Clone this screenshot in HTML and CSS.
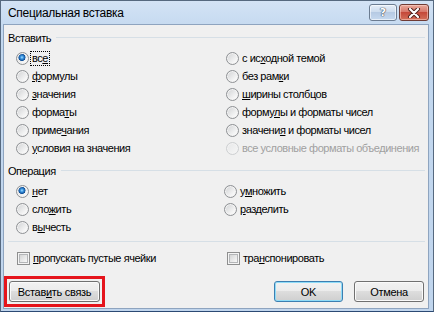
FILE: index.html
```html
<!DOCTYPE html>
<html lang="ru">

<head>
  <meta charset="UTF-8" />
  <meta name="viewport" content="width=device-width, initial-scale=1.0" />
  <title>Специальная вставка</title>
  <link rel="stylesheet" href="styles.css">
</head>

<body>
  <div class="window">
    <div class="titlebar">
      <span class="title">Специальная вставка</span>
      <div class="caption-buttons">
        <span class="cap-btn help">?</span>
        <span class="cap-btn close">
          <svg width="14" height="10" viewBox="0 0 14 10">
            <path d="M3 1 L11 9 M11 1 L3 9" stroke="#4a1d18" stroke-width="4" stroke-linecap="round" />
            <path d="M3 1 L11 9 M11 1 L3 9" stroke="#ffffff" stroke-width="2.2" stroke-linecap="round" />
          </svg>
        </span>
      </div>
    </div>

    <div class="body">
      <div class="group-head"><span>Вставить</span><span class="rule"></span></div>
      <div class="options paste">
        <div class="opt"><span class="radio checked"></span><span class="focus">вс<u>е</u></span></div>
        <div class="opt"><span class="radio"></span><span>с ис<u>х</u>одной темой</span></div>
        <div class="opt"><span class="radio"></span><span><u>ф</u>ормулы</span></div>
        <div class="opt"><span class="radio"></span><span>без рам<u>к</u>и</span></div>
        <div class="opt"><span class="radio"></span><span><u>з</u>начения</span></div>
        <div class="opt"><span class="radio"></span><span><u>ш</u>ирины столбцов</span></div>
        <div class="opt"><span class="radio"></span><span>форма<u>т</u>ы</span></div>
        <div class="opt"><span class="radio"></span><span>форму<u>л</u>ы и форматы чисел</span></div>
        <div class="opt"><span class="radio"></span><span>приме<u>ч</u>ания</span></div>
        <div class="opt"><span class="radio"></span><span>значени<u>я</u> и форматы чисел</span></div>
        <div class="opt"><span class="radio"></span><span><u>у</u>словия на значения</span></div>
        <div class="opt disabled"><span class="radio"></span><span>все условные форматы объединения</span></div>
      </div>

      <div class="group-head second"><span>Операция</span><span class="rule"></span></div>
      <div class="options operation">
        <div class="opt"><span class="radio checked"></span><span><u>н</u>ет</span></div>
        <div class="opt"><span class="radio"></span><span>у<u>м</u>ножить</span></div>
        <div class="opt"><span class="radio"></span><span>сло<u>ж</u>ить</span></div>
        <div class="opt"><span class="radio"></span><span><u>р</u>азделить</span></div>
        <div class="opt"><span class="radio"></span><span>в<u>ы</u>честь</span></div>
      </div>

      <div class="separator"></div>

      <div class="options checks">
        <div class="opt"><span class="check"></span><span><u>п</u>ропускать пустые ячейки</span></div>
        <div class="opt"><span class="check"></span><span>тра<u>н</u>спонировать</span></div>
      </div>

      <div class="actions">
        <div class="highlight">
          <button class="btn link">Встав<u>и</u>ть связь</button>
        </div>
        <button class="btn default">OK</button>
        <button class="btn">Отмена</button>
      </div>
    </div>
  </div>
</body>

</html>
```

FILE: styles.css
```css
html,
body,
div,
p {
  margin: 0;
  padding: 0;
}

body {
  background: #ffffff;
  font-family: "Liberation Sans", Arial, sans-serif;
  font-size: 11px;
  letter-spacing: -0.45px;
  color: #000000;
}

.window {
  width: 434px;
  height: 312px;
  box-sizing: border-box;
  border: 1px solid #56697f;
  border-bottom-color: #2c4a74;
  padding: 0 4px 2px 2px;
  background: linear-gradient(#d3e3f5, #c3d8ef 30px, #c0d5ed);
  display: flex;
  flex-direction: column;
}

/* title bar */
.titlebar {
  height: 23px;
  display: flex;
  align-items: flex-start;
}

.title {
  margin: 4px 0 0 5px;
  font-size: 12px;
  letter-spacing: -0.3px;
  line-height: 16px;
}

.caption-buttons {
  margin: 3px 0 0 auto;
  display: flex;
  gap: 2px;
}

.cap-btn {
  height: 17px;
  box-sizing: border-box;
  border: 1px solid #6b7c91;
  border-radius: 3px;
  display: flex;
  align-items: center;
  justify-content: center;
}

.help {
  width: 28px;
  background: linear-gradient(#e6eef8, #cddcee 45%, #b6cae3 50%, #c6d9ef);
  box-shadow: inset 0 0 0 1px rgba(255, 255, 255, 0.6);
  color: #ffffff;
  font-family: "DejaVu Sans", sans-serif;
  font-weight: bold;
  font-size: 11px;
  letter-spacing: 0;
  text-shadow: 0 0 1px #3d4b5c, 0 0 1px #3d4b5c, 0 0 1px #3d4b5c;
}

.close {
  width: 30px;
  border-color: #6f3b34;
  background: linear-gradient(#e9a99b, #d7776a 45%, #c5493a 50%, #d3705a);
  box-shadow: inset 0 0 0 1px rgba(255, 220, 210, 0.5);
}

/* dialog body */
.body {
  flex: 1;
  background: #f0f0f0;
  border: 1px solid #8ea4bf;
  padding-top: 5px;
}

.group-head {
  display: flex;
  align-items: center;
  height: 15px;
  padding: 0 3px 0 4px;
}

.group-head.second {
  margin-top: 6px;
}

.group-head .rule {
  flex: 1;
  height: 1px;
  margin-left: 5px;
  background: #d6dfe6;
}

.options {
  display: grid;
  grid-template-columns: 210px 1fr;
  grid-auto-rows: 18px;
  padding-left: 12px;
  margin-top: 4px;
}

.options.operation {
  grid-template-columns: 208px 1fr;
}

.options.checks {
  margin-top: 7px;
  padding-left: 13px;
}

.opt {
  display: flex;
  align-items: center;
  gap: 3px;
  white-space: nowrap;
}

.opt.disabled {
  color: #a0a0a0;
}

.focus {
  outline: 1px dotted #000000;
  outline-offset: 0;
  padding: 0 1px;
  margin-left: -1px;
  line-height: 13px;
}

u {
  text-decoration: underline;
  text-underline-offset: 1px;
}

.radio {
  width: 13px;
  height: 13px;
  box-sizing: border-box;
  border-radius: 50%;
  border: 1px solid #8e9194;
  background: linear-gradient(135deg, #cfd1d3, #f7f7f7 75%);
  box-shadow: inset 0 0 0 1px #f3f3f3;
  flex: none;
}

.radio.checked {
  background: radial-gradient(circle at 45% 40%, #a8e0ff 0, #3b96e2 1.5px, #0f4d94 3.3px, transparent 3.8px),
    linear-gradient(135deg, #cfd1d3, #f7f7f7 75%);
}

.disabled .radio {
  border-color: #cdcfd1;
  background: linear-gradient(135deg, #e6e7e8, #f6f6f6);
}

.check {
  width: 13px;
  height: 13px;
  box-sizing: border-box;
  border: 1px solid #8e8f8f;
  background: linear-gradient(135deg, #cacbcc, #f7f7f7 80%);
  box-shadow: inset 0 0 0 1px #f4f4f4, inset 0 0 0 2px #b4b6b8;
  flex: none;
}

.separator {
  height: 1px;
  margin: 5px 3px 0 4px;
  background: #d6dfe6;
}

/* buttons */
.actions {
  display: flex;
  align-items: center;
  gap: 11px;
  margin-top: 9px;
  padding-right: 4px;
}

.highlight {
  border: 3px solid #e5141c;
  padding: 2px;
  display: flex;
}

.btn {
  height: 21px;
  box-sizing: border-box;
  border: 1px solid #707070;
  border-radius: 3px;
  background: linear-gradient(#f2f2f2, #ebebeb 50%, #dddddd 50%, #cfcfcf);
  box-shadow: inset 0 0 0 1px #fafafa;
  font-family: "Liberation Sans", Arial, sans-serif;
  font-size: 11px;
  letter-spacing: -0.3px;
  color: #000000;
  padding: 0;
  width: 70px;
}

.btn.link {
  width: 91px;
}

.btn.default {
  margin-left: auto;
  width: 69px;
  border-color: #3c7fb1;
  box-shadow: inset 0 0 0 1px #8fdcf8;
}
```
